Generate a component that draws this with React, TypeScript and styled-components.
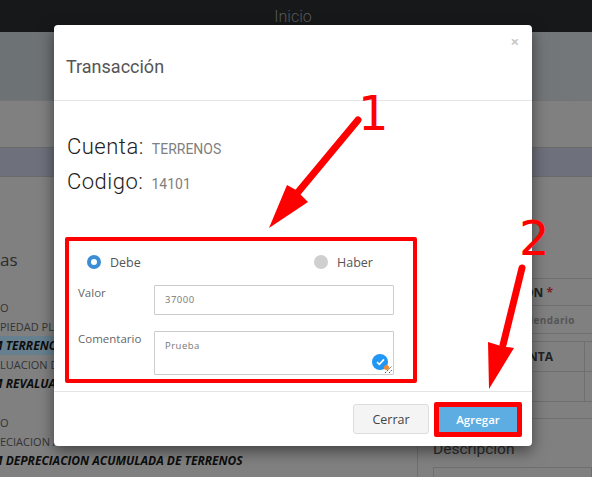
import React from 'react';
import styled, { createGlobalStyle } from 'styled-components';

const GlobalStyle = createGlobalStyle`
  html, body {
    margin: 0;
    padding: 0;
    background: #808080;
    font-family: "Open Sans", sans-serif;
  }
`;

const Page = styled.div`
  position: relative;
  width: 592px;
  height: 477px;
  overflow: hidden;
  background: #808080;
`;

const NavBar = styled.div`
  height: 32px;
  padding-right: 6px;
  background: #17181a;
  color: #585a5c;
  font-size: 16px;
  line-height: 33px;
  text-align: center;
  font-family: "Roboto", sans-serif;
  font-weight: 300;
`;

const Banner = styled.div`
  height: 69px;
  background: linear-gradient(90deg, #6d7275, #73777a);
  border-bottom: 1px solid #747474;
  box-sizing: border-box;
`;

const Strip = styled.div`
  height: 30px;
  margin-top: 46px;
  background: #6e717b;
  border-top: 1px solid #6a6a6a;
  border-bottom: 1px solid #6a6a6a;
  box-sizing: border-box;
`;

const Columns = styled.div`
  display: grid;
  grid-template-columns: 417px 1fr;
  height: 300px;
`;

const Accounts = styled.div`
  padding-top: 71px;
  overflow: hidden;
`;

const SectionTitle = styled.div`
  font-size: 17px;
  line-height: 24px;
  color: #2b2b2b;
  margin-bottom: 26px;
`;

const AccountRow = styled.div<{ $strong?: boolean; $active?: boolean; $gap?: boolean }>`
  height: 19px;
  line-height: 19px;
  font-size: ${(p) => (p.$strong ? 12 : 11)}px;
  text-indent: ${(p) => (p.$strong ? -8 : 0)}px;
  white-space: nowrap;
  color: ${(p) => (p.$strong ? '#0d0d0d' : '#333')};
  font-weight: ${(p) => (p.$strong ? 700 : 400)};
  font-style: ${(p) => (p.$strong ? 'italic' : 'normal')};
  background: ${(p) => (p.$active ? '#67808f' : 'transparent')};
  margin-top: ${(p) => (p.$gap ? '20px' : '0')};
`;

const SidePanel = styled.div`
  padding-top: 101px;
`;

const SideHead = styled.div`
  height: 28px;
  border-top: 1px solid #6f6f6f;
  border-bottom: 1px solid #6f6f6f;
  padding-left: 107px;
  font-size: 12px;
  line-height: 27px;
  font-weight: 700;
  color: #222;
  box-sizing: border-box;

  span {
    color: #7b2020;
  }
`;

const SideInput = styled.div`
  height: 28px;
  border-bottom: 1px solid #6f6f6f;
  padding-left: 113px;
  font-size: 10px;
  line-height: 28px;
  font-weight: 700;
  color: #555;
  letter-spacing: 0.4px;
  box-sizing: border-box;
`;

const SideTable = styled.div`
  margin-top: 7px;
  height: 61px;
  border-top: 1px solid #6f6f6f;
  border-bottom: 1px solid #6f6f6f;
  box-sizing: border-box;
  display: grid;
  grid-template-columns: 168px 1fr;
  grid-template-rows: 30px 1fr;
`;

const SideCell = styled.div<{ $last?: boolean; $bottom?: boolean }>`
  font-size: 12px;
  line-height: 29px;
  font-weight: 700;
  color: #222;
  padding-left: ${(p) => (p.$last ? 6 : 111)}px;
  box-sizing: border-box;
  border-right: ${(p) => (p.$last ? 'none' : '1px solid #6f6f6f')};
  border-bottom: ${(p) => (p.$bottom ? 'none' : '1px solid #6f6f6f')};
`;

const HeaderMark = styled.span`
  display: block;
  width: 1px;
  height: 8px;
  margin-top: 11px;
  background: #8a8060;
`;

const DescriptionBox = styled.div`
  margin-top: 16px;
  border-top: 1px solid #6f6f6f;
  border-left: 1px solid #6f6f6f;
  height: 80px;
  padding: 20px 0 0 15px;
  font-family: "Roboto", sans-serif;
  font-size: 15.5px;
  line-height: 20px;
  color: #2c2c2c;
  box-sizing: border-box;
`;

const DescriptionInput = styled.div`
  margin-top: 8px;
  height: 30px;
  border: 1px solid #6f6f6f;
`;

const Modal = styled.div`
  position: absolute;
  left: 54px;
  top: 25px;
  width: 478px;
  height: 421px;
  background: #fff;
  border-radius: 4px;
  box-shadow: 0 5px 15px rgba(0, 0, 0, 0.5);
  display: flex;
  flex-direction: column;
`;

const ModalHeader = styled.div`
  height: 76px;
  box-sizing: border-box;
  border-bottom: 1px solid #e5e5e5;
  padding: 29px 13px 0 12px;
  display: flex;
  justify-content: space-between;
  align-items: flex-start;
`;

const ModalTitle = styled.div`
  font-family: "Roboto", sans-serif;
  font-size: 18px;
  line-height: 26px;
  color: #555;
`;

const CloseButton = styled.span`
  font-size: 15px;
  line-height: 15px;
  margin: -20px 0 0;
  font-weight: 700;
  color: #c8c8c8;
`;

const ModalBody = styled.div`
  flex: 1;
  padding: 28px 11px 0;
`;

const InfoLine = styled.div`
  font-family: "Roboto", sans-serif;
  display: flex;
  align-items: baseline;
  gap: 8px;
  height: 35px;
  line-height: 35px;
`;

const InfoLabel = styled.span`
  font-size: 22px;
  font-weight: 300;
  margin-left: 2px;
  color: #222;
  letter-spacing: 0.5px;
`;

const InfoValue = styled.span`
  font-size: 14px;
  color: #808080;
`;

const FormBox = styled.div`
  width: 352px;
  height: 146px;
  margin-top: 38px;
  border: 4px solid #ff0000;
  border-radius: 2px;
  box-sizing: border-box;
  padding: 10px 9px 0;
`;

const RadioRow = styled.div`
  display: flex;
  padding-left: 9px;
  height: 22px;
  align-items: center;
`;

const RadioOption = styled.label<{ $width: number }>`
  display: flex;
  align-items: center;
  gap: 9px;
  width: ${(p) => p.$width}px;
  font-size: 12.5px;
  color: #555;
`;

const RadioDot = styled.span<{ $checked?: boolean }>`
  width: 14px;
  height: 14px;
  border-radius: 50%;
  box-sizing: border-box;
  background: ${(p) => (p.$checked ? '#fff' : '#cfcfcf')};
  border: ${(p) => (p.$checked ? '4px solid #3b8ed6' : 'none')};
`;

const FieldRow = styled.div<{ $height: number }>`
  display: grid;
  grid-template-columns: 76px 240px;
  height: ${(p) => p.$height}px;
  margin-top: ${(p) => (p.$height > 40 ? 16 : 12)}px;
`;

const FieldLabel = styled.div`
  font-size: 11.5px;
  line-height: 16px;
  color: #666;
`;

const FieldBox = styled.div`
  position: relative;
  border: 1px solid #ccc;
  border-radius: 1px;
  box-sizing: border-box;
  padding: 0 10px;
  font-size: 9.5px;
  color: #777;
  letter-spacing: 0.5px;
`;

const ValueText = styled.div`
  line-height: 28px;
`;

const AreaText = styled.div`
  line-height: 12px;
  padding-top: 8px;
`;

const CheckBadge = styled.span`
  position: absolute;
  right: 5px;
  bottom: 4px;
  width: 16px;
  height: 16px;
  border-radius: 50%;
  background: #2196f3;
  display: flex;
  align-items: center;
  justify-content: center;
`;

const OrangeDot = styled.span`
  position: absolute;
  right: 4px;
  bottom: 4px;
  width: 5px;
  height: 5px;
  border-radius: 50%;
  background: #f28a30;
`;

const ResizeGrip = styled.svg`
  position: absolute;
  right: 0;
  bottom: 0;
`;

const ModalFooter = styled.div`
  height: 55px;
  box-sizing: border-box;
  border-top: 1px solid #e5e5e5;
  display: flex;
  justify-content: flex-end;
  align-items: center;
  gap: 5px;
  padding: 0 10px 0 0;
`;

const CloseAction = styled.button`
  width: 76px;
  height: 30px;
  font: 400 12.5px "Open Sans", sans-serif;
  color: #444;
  background: #f4f4f4;
  border: 1px solid #ddd;
  border-radius: 3px;
`;

const SubmitAction = styled.button`
  width: 88px;
  height: 35px;
  box-sizing: border-box;
  font: 600 11.5px "Open Sans", sans-serif;
  color: #fff;
  background: #5dade2;
  border: 5px solid #ff0000;
  border-radius: 2px;
`;

const Overlay = styled.svg`
  position: absolute;
  left: 0;
  top: 0;
  pointer-events: none;
`;

const StepNumber = styled.span<{ $x: number; $y: number }>`
  position: absolute;
  left: ${(p) => p.$x}px;
  top: ${(p) => p.$y}px;
  font-family: "DejaVu Sans", sans-serif;
  font-size: 48px;
  line-height: 50px;
  color: #ff0000;
`;

export default function App() {
  return (
    <Page>
      <GlobalStyle />
      <NavBar>Inicio</NavBar>
      <Banner />
      <Strip />
      <Columns>
        <Accounts>
          <SectionTitle>as</SectionTitle>
          <AccountRow>O</AccountRow>
          <AccountRow>PIEDAD PLANTA</AccountRow>
          <AccountRow $strong $active>M TERRENOS</AccountRow>
          <AccountRow>LUACION DE</AccountRow>
          <AccountRow $strong>M REVALUACION</AccountRow>
          <AccountRow $gap>O</AccountRow>
          <AccountRow>ECIACION ACUM</AccountRow>
          <AccountRow $strong>M DEPRECIACION ACUMULADA DE TERRENOS</AccountRow>
        </Accounts>
        <SidePanel>
          <SideHead>ON <span>*</span></SideHead>
          <SideInput>lendario</SideInput>
          <SideTable>
            <SideCell>NTA</SideCell>
            <SideCell $last><HeaderMark /></SideCell>
            <SideCell $bottom />
            <SideCell $last $bottom />
          </SideTable>
          <DescriptionBox>
            Descripcion
            <DescriptionInput />
          </DescriptionBox>
        </SidePanel>
      </Columns>

      <Modal>
        <ModalHeader>
          <ModalTitle>Transacción</ModalTitle>
          <CloseButton>×</CloseButton>
        </ModalHeader>
        <ModalBody>
          <InfoLine>
            <InfoLabel>Cuenta:</InfoLabel>
            <InfoValue>TERRENOS</InfoValue>
          </InfoLine>
          <InfoLine>
            <InfoLabel>Codigo:</InfoLabel>
            <InfoValue>14101</InfoValue>
          </InfoLine>
          <FormBox>
            <RadioRow>
              <RadioOption $width={227}>
                <RadioDot $checked />
                Debe
              </RadioOption>
              <RadioOption $width={80}>
                <RadioDot />
                Haber
              </RadioOption>
            </RadioRow>
            <FieldRow $height={30}>
              <FieldLabel>Valor</FieldLabel>
              <FieldBox>
                <ValueText>37000</ValueText>
              </FieldBox>
            </FieldRow>
            <FieldRow $height={44}>
              <FieldLabel>Comentario</FieldLabel>
              <FieldBox>
                <AreaText>Prueba</AreaText>
                <ResizeGrip width="9" height="9" viewBox="0 0 9 9">
                  <path d="M1 8 L8 1 M5 8 L8 5" stroke="#555" strokeWidth="1" strokeDasharray="1.5 1" />
                </ResizeGrip>
                <CheckBadge>
                  <svg width="9" height="8" viewBox="0 0 9 8">
                    <path d="M1 4.2 L3.4 6.4 L8 1.4" fill="none" stroke="#fff" strokeWidth="1.6" />
                  </svg>
                </CheckBadge>
                <OrangeDot />
              </FieldBox>
            </FieldRow>
          </FormBox>
        </ModalBody>
        <ModalFooter>
          <CloseAction>Cerrar</CloseAction>
          <SubmitAction>Agregar</SubmitAction>
        </ModalFooter>
      </Modal>

      <Overlay width="592" height="477" viewBox="0 0 592 477">
        <path d="M358 120 L294 197" stroke="#ff0000" strokeWidth="7" strokeLinecap="round" fill="none" />
        <polygon points="269,228 287,185 296,190 308,202" fill="#ff0000" />
        <path d="M522 268 L503 345" stroke="#ff0000" strokeWidth="7" strokeLinecap="round" fill="none" />
        <polygon points="489,389 488,342 501,346 514,348" fill="#ff0000" />
      </Overlay>
      <StepNumber $x={358} $y={88}>1</StepNumber>
      <StepNumber $x={519} $y={213}>2</StepNumber>
    </Page>
  );
}
